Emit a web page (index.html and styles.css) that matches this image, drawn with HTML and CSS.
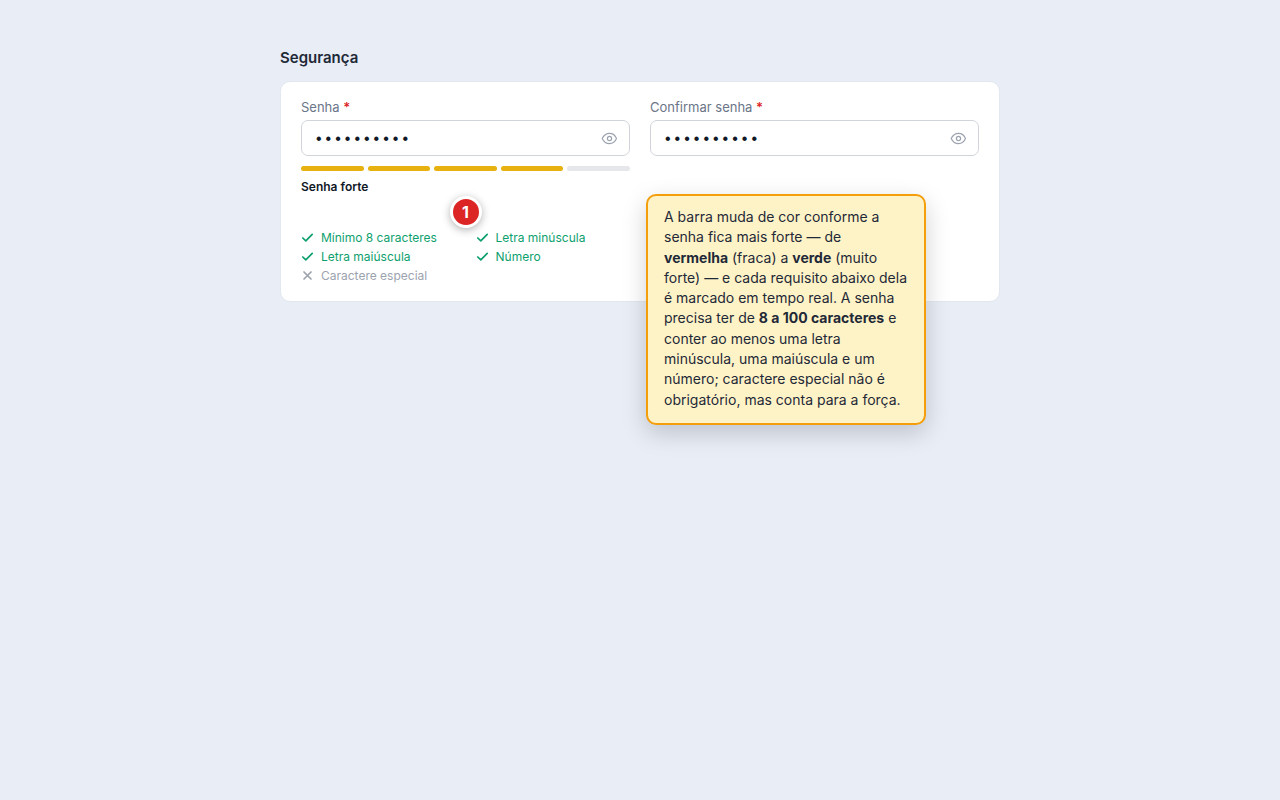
FILE: index.html
```html
<!DOCTYPE html>
<html lang="pt-BR">
<head>
    <meta charset="UTF-8">
    <meta name="viewport" content="width=device-width, initial-scale=1.0">
    <title>Segurança</title>
    <link rel="stylesheet" href="styles.css">
</head>
<body>
    <main class="container">
        <h1 class="section-title">Segurança</h1>

        <form class="card">
            <div class="field">
                <label for="senha">Senha <span class="required">*</span></label>
                <div class="input-wrap">
                    <input type="password" id="senha" value="Senha12345">
                    <button type="button" class="toggle" aria-label="Mostrar senha">
                        <svg viewBox="0 0 16 16" width="16" height="16"><path d="M1.200 8.500C2.800 5.200 5.300 3.300 8.500 3.300S14.200 5.200 15.500 8.500C14.200 11.800 11.700 13.700 8.500 13.700S2.800 11.800 1.200 8.500Z"/><circle cx="8.500" cy="8.500" r="2.100"/></svg>
                    </button>
                </div>

                <div class="strength">
                    <span class="bar on"></span>
                    <span class="bar on"></span>
                    <span class="bar on"></span>
                    <span class="bar on"></span>
                    <span class="bar"></span>
                </div>
                <p class="strength-label">Senha forte</p>

                <ul class="rules">
                    <li class="ok"><svg viewBox="0 0 14 14" width="14" height="14"><path d="M1.800 7L4.800 9.900L11.200 3.400"/></svg>Mínimo 8 caracteres</li>
                    <li class="ok"><svg viewBox="0 0 14 14" width="14" height="14"><path d="M1.800 7L4.800 9.900L11.200 3.400"/></svg>Letra minúscula</li>
                    <li class="ok"><svg viewBox="0 0 14 14" width="14" height="14"><path d="M1.800 7L4.800 9.900L11.200 3.400"/></svg>Letra maiúscula</li>
                    <li class="ok"><svg viewBox="0 0 14 14" width="14" height="14"><path d="M1.800 7L4.800 9.900L11.200 3.400"/></svg>Número</li>
                    <li><svg viewBox="0 0 14 14" width="14" height="14"><path d="M3 3L10 10M10 3L3 10"/></svg>Caractere especial</li>
                </ul>
                <span class="marker">1</span>
            </div>

            <div class="field">
                <label for="confirmar">Confirmar senha <span class="required">*</span></label>
                <div class="input-wrap">
                    <input type="password" id="confirmar" value="Senha12345">
                    <button type="button" class="toggle" aria-label="Mostrar senha">
                        <svg viewBox="0 0 16 16" width="16" height="16"><path d="M1.200 8.500C2.800 5.200 5.300 3.300 8.500 3.300S14.200 5.200 15.500 8.500C14.200 11.800 11.700 13.700 8.500 13.700S2.800 11.800 1.200 8.500Z"/><circle cx="8.500" cy="8.500" r="2.100"/></svg>
                    </button>
                </div>
            </div>

            <div class="callout">A barra muda de cor conforme a senha fica mais forte — de <strong>vermelha</strong> (fraca) a <strong>verde</strong> (muito forte) — e cada requisito abaixo dela é marcado em tempo real. A senha precisa ter de <strong>8 a 100 caracteres</strong> e conter ao menos uma letra minúscula, uma maiúscula e um número; caractere especial não é obrigatório, mas conta para a força.</div>
        </form>
    </main>
</body>
</html>
```

FILE: styles.css
```css
* {
    box-sizing: border-box;
}
body {
    font-family: Inter, "Liberation Sans", sans-serif;
    margin: 0;
    padding: 48px 24px;
    min-height: 100vh;
    background: #e8edf6;
    color: #1f2937;
}
.container {
    max-width: 720px;
    margin: 0 auto;
}
.section-title {
    margin: 0 0 13px;
    font-size: 15px;
    line-height: 20px;
    font-weight: 600;
}
.card {
    position: relative;
    display: grid;
    grid-template-columns: 1fr 1fr;
    gap: 20px;
    padding: 16px 20px 18px;
    background: #fff;
    border: 1px solid #e2e8f0;
    border-radius: 10px;
}
.field {
    position: relative;
}
.field label {
    display: block;
    margin-bottom: 4px;
    font-size: 13px;
    line-height: 18px;
    color: #6b7588;
}
.required {
    color: #dc2626;
    font-weight: 600;
}
.input-wrap {
    display: flex;
    align-items: center;
    height: 36px;
    padding: 0 12px;
    border: 1px solid #d1d5db;
    border-radius: 7px;
    background: #fff;
}
.input-wrap input {
    flex: 1;
    min-width: 0;
    padding: 3px 0 0;
    border: 0;
    outline: 0;
    background: none;
    font-family: "Liberation Mono", monospace;
    font-size: 16px;
    color: #111827;
}
.toggle {
    display: flex;
    padding: 0;
    border: 0;
    background: none;
    cursor: pointer;
}
svg {
    flex: none;
    fill: none;
    stroke: currentColor;
    stroke-linecap: round;
    stroke-linejoin: round;
}
.toggle svg {
    color: #9ca3af;
    stroke-width: 1.2;
}
.strength {
    display: flex;
    gap: 4px;
    margin-top: 10px;
}
.bar {
    flex: 1;
    height: 5px;
    border-radius: 3px;
    background: #e5e7eb;
}
.bar.on {
    background: #e7b10f;
}
.strength-label {
    margin: 8px 0 0;
    font-size: 12px;
    line-height: 16px;
    font-weight: 600;
    color: #111827;
}
.rules {
    display: grid;
    grid-template-columns: 1fr 1fr;
    gap: 4px 20px;
    margin: 35px 0 0;
    padding: 0;
    list-style: none;
    font-size: 12px;
    line-height: 15px;
    color: #9ca3af;
}
.rules li {
    display: flex;
    align-items: center;
    gap: 6px;
}
.rules svg {
    stroke-width: 1.7;
}
.rules .ok {
    color: #0e9f6e;
}
.marker {
    position: absolute;
    top: 98px;
    left: 50%;
    display: flex;
    align-items: center;
    justify-content: center;
    width: 32px;
    height: 32px;
    margin-left: -16px;
    border: 3px solid #fff;
    border-radius: 50%;
    background: #dc2626;
    box-shadow: 0 2px 8px rgba(0, 0, 0, 0.3);
    color: #fff;
    font-size: 16px;
    font-weight: 700;
}
.callout {
    position: absolute;
    top: 112px;
    right: 73px;
    width: 280px;
    padding: 11px 16px 13px;
    border: 2px solid #f59e0b;
    border-radius: 10px;
    background: #fef3c7;
    box-shadow: 0 8px 24px rgba(0, 0, 0, 0.18);
    font-size: 14px;
    line-height: 1.45;
}
```
